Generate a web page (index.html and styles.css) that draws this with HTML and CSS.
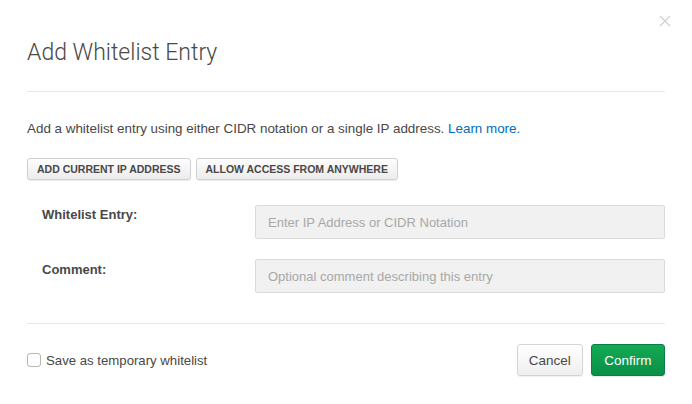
FILE: index.html
```html
<!DOCTYPE html>
<html>
<head>
<meta charset="utf-8">
<link rel="stylesheet" href="styles.css">
</head>
<body>
<div class="modal">
  <button class="close" aria-label="Close">
    <svg width="12" height="12" viewBox="0 0 12 12"><path d="M1 1L11 11M11 1L1 11" stroke="#cfcfcf" stroke-width="1.2" fill="none"/></svg>
  </button>
  <header class="modal-header">
    <h1 class="title">Add Whitelist Entry</h1>
  </header>
  <section class="modal-body">
    <p class="desc">Add a whitelist entry using either CIDR notation or a single IP address. <a href="#" class="link">Learn more.</a></p>
    <div class="quick-actions">
      <button class="btn-small">ADD CURRENT IP ADDRESS</button>
      <button class="btn-small">ALLOW ACCESS FROM ANYWHERE</button>
    </div>
    <div class="form">
      <div class="row">
        <label class="label">Whitelist Entry:</label>
        <input class="field" type="text" placeholder="Enter IP Address or CIDR Notation">
      </div>
      <div class="row">
        <label class="label">Comment:</label>
        <input class="field" type="text" placeholder="Optional comment describing this entry">
      </div>
    </div>
  </section>
  <footer class="modal-footer">
    <label class="check">
      <input type="checkbox" class="checkbox">
      <span>Save as temporary whitelist</span>
    </label>
    <div class="actions">
      <button class="btn btn-default">Cancel</button>
      <button class="btn btn-primary">Confirm</button>
    </div>
  </footer>
</div>
</body>
</html>
```
FILE: styles.css
```css
html, body {
  margin: 0;
  padding: 0;
  background: #fff;
}
body {
  font-family: "Liberation Sans", Arial, sans-serif;
  color: #494747;
  font-size: 13px;
}
.modal {
  position: relative;
  width: 692px;
  height: 404px;
  box-sizing: border-box;
  padding: 0 27px;
}
.close {
  position: absolute;
  top: 15px;
  right: 21px;
  border: 0;
  background: none;
  padding: 0;
  width: 12px;
  height: 12px;
  display: block;
}
.close svg { display: block; }
.modal-header {
  padding-top: 38px;
  padding-bottom: 23px;
  border-bottom: 1px solid #e7e7e7;
}
.title {
  margin: 0;
  font-family: Roboto, "Liberation Sans", sans-serif;
  font-weight: 300;
  font-size: 23px;
  line-height: 30px;
  color: #494747;
}
.desc {
  margin: 28px 0 0;
  line-height: 18px;
  font-size: 13.4px;
}
.link {
  color: #006cbc;
  text-decoration: none;
}
.quick-actions {
  display: flex;
  gap: 5px;
  margin-top: 20px;
}
.btn-small {
  height: 22px;
  box-sizing: border-box;
  padding: 0 9px;
  font-family: "Liberation Sans", Arial, sans-serif;
  font-weight: bold;
  font-size: 10.5px;
  color: #494747;
  background: linear-gradient(#fdfdfd, #ececec);
  border: 1px solid #d0d0d0;
  border-radius: 3px;
  box-shadow: 0 1px 1px rgba(0,0,0,0.08);
}
.form {
  margin-top: 25px;
  padding-left: 15px;
  display: flex;
  flex-direction: column;
  gap: 20px;
}
.row {
  display: flex;
  align-items: flex-start;
}
.label {
  width: 213px;
  flex: none;
  font-weight: bold;
  font-size: 13px;
  line-height: 18px;
  padding-top: 1px;
}
.row + .row .label {
  padding-top: 2px;
}
.field {
  flex: 1;
  height: 34px;
  box-sizing: border-box;
  margin: 0;
  padding: 0 12px;
  background: #f1f1f1;
  border: 1px solid #dadada;
  border-radius: 2px;
  font-family: "Liberation Sans", Arial, sans-serif;
  font-size: 13px;
  color: #494747;
  outline: none;
}
.field::placeholder {
  color: #a8a8a8;
}
.modal-footer {
  margin-top: 30px;
  border-top: 1px solid #e7e7e7;
  padding-top: 20px;
  display: flex;
  justify-content: space-between;
  align-items: center;
}
.check {
  display: flex;
  align-items: center;
  gap: 5px;
  font-size: 13.2px;
}
.checkbox {
  appearance: none;
  -webkit-appearance: none;
  margin: 0;
  width: 14px;
  height: 14px;
  box-sizing: border-box;
  border: 1px solid #b5b5b5;
  border-radius: 3px;
  background: #fff;
}
.actions {
  display: flex;
  gap: 8px;
}
.btn {
  height: 32px;
  box-sizing: border-box;
  padding: 0 11px;
  font-family: "Liberation Sans", Arial, sans-serif;
  font-size: 13.5px;
  border-radius: 3px;
}
.btn-default {
  color: #494747;
  background: linear-gradient(#ffffff, #efefef);
  border: 1px solid #d4d4d4;
  box-shadow: 0 1px 1px rgba(0,0,0,0.06);
}
.btn-primary {
  padding: 0 12.5px;
  color: #fff;
  background: linear-gradient(#13aa52, #0b8f48);
  border: 1px solid #09804c;
  box-shadow: 0 1px 1px rgba(0,0,0,0.1);
}
```
